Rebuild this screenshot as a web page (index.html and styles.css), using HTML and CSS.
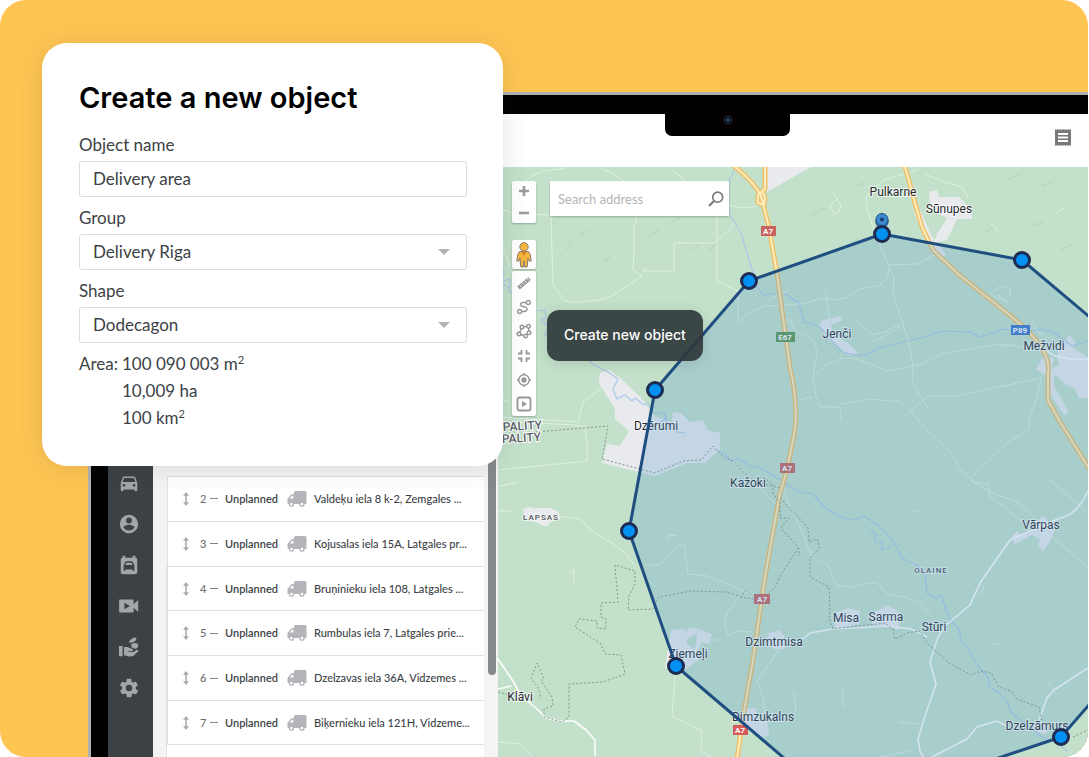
FILE: index.html
```html
<!DOCTYPE html>
<html lang="en">
<head>
<meta charset="utf-8">
<title>Create a new object</title>
<meta name="viewport" content="width=device-width, initial-scale=1">
<link rel="stylesheet" href="styles.css">
</head>
<body>
<svg class="defs" aria-hidden="true">
  <symbol id="truck" viewBox="0 0 20 16"><path fill-rule="evenodd" d="M7 1.500Q7 0 8.500 0H18q1.500 0 1.500 1.500V12q0 1-1 1H1.500q-1 0-1-1V8.800q0-1 .8-1.800l2.200-2.800Q4.300 3 5.500 3H7zM6.400 4.600q-1.200-.2-1.800.6L2.800 7.600h3.600z"/><circle cx="4.400" cy="13.200" r="2" fill="#fff" stroke="currentColor" stroke-width="1.300"/><circle cx="15" cy="13.200" r="2" fill="#fff" stroke="currentColor" stroke-width="1.300"/></symbol>
  <symbol id="drag" viewBox="0 0 8 14"><path d="M4 0l3 3.800H4.800v6.400H7L4 14l-3-3.800h2.200V3.800H1z"/></symbol>
</svg>
<main class="scene">
  <div class="laptop">
    <div class="notch"><span class="camera"></span></div>
    <div class="screen">
      <header class="topbar">
        <button class="icon-button" aria-label="Report"><svg width="16" height="17" viewBox="0 0 16 17"><path fill="#77797b" fill-rule="evenodd" d="M0 0l1.300 1L2.700 0 4 1l1.300-1 1.400 1L8 0l1.300 1 1.400-1L12 1l1.300-1 1.400 1L16 0v17l-1.300-1-1.400 1L12 16l-1.300 1-1.400-1L8 17l-1.300-1-1.400 1L4 16l-1.300 1-1.400-1L0 17zM3 4v2h10V4zm0 3.500v2h10v-2zM3 11v2h10v-2z"/></svg></button>
      </header>
      <div class="workspace">
        <nav class="sidebar">
          <button aria-label="Vehicles"><svg viewBox="0 0 24 24"><path d="M18.900 6c-.2-.6-.8-1-1.400-1h-11c-.7 0-1.200.4-1.400 1L3 12v8c0 .6.400 1 1 1h1c.6 0 1-.4 1-1v-1h12v1c0 .6.400 1 1 1h1c.6 0 1-.4 1-1v-8zM6.500 16a1.500 1.500 0 1 1 0-3 1.500 1.500 0 0 1 0 3zm11 0a1.500 1.500 0 1 1 0-3 1.500 1.500 0 0 1 0 3zM5 11l1.500-4.500h11L19 11z"/></svg></button>
          <button aria-label="Drivers"><svg viewBox="0 0 24 24"><path d="M12 2a10 10 0 1 0 0 20 10 10 0 0 0 0-20zm0 3a3.200 3.200 0 1 1 0 6.400A3.200 3.200 0 0 1 12 5zm0 14.200a7.200 7.200 0 0 1-6-3.200c0-2 4-3.100 6-3.100s6 1.100 6 3.100a7.200 7.200 0 0 1-6 3.200z"/></svg></button>
          <button aria-label="Schedule"><svg viewBox="0 0 24 24"><path fill-rule="evenodd" d="M5 2h3v2h8V2h3v2q2 0 2 2v14q0 2-2 2H5q-2 0-2-2V6q0-2 2-2zm3.500 6L6.200 12v6.500h1.600V17h8.400v1.500h1.600V12l-2.300-4zm.8 1.500h5.400l1.300 2.500H8z"/></svg></button>
          <button aria-label="Video"><svg viewBox="0 0 24 24"><path fill-rule="evenodd" d="M2 5h14q1 0 1 1v4l5-4.500v13L17 14v4q0 1-1 1H2q-.8 0-.8-1V6q0-1 .8-1zm5 3.500v7l6-3.500z"/></svg></button>
          <button aria-label="Eco driving"><svg viewBox="0 0 24 24"><path d="M1 11h4v11H1zM6.500 12h4l5.500 2.500q1 1-.3 2H11v1h6l3.500-2.500q2.300 0 1.500 2l-5 4.500Q14 23 11 22l-4.500-1zM12 6.500q2-5 8-5 .5 4.500-5 5.500-2 .5-2.500 0zM15 12.500q-2-4 2-4.500 4-1.500 5 1.500.5 4-3.500 4.500z"/></svg></button>
          <button aria-label="Settings"><svg viewBox="0 0 24 24"><path d="M19.400 13a7.500 7.500 0 0 0 0-2l2.100-1.600a.5.500 0 0 0 .1-.7l-2-3.400a.5.500 0 0 0-.6-.2l-2.500 1a7.300 7.300 0 0 0-1.700-1L14.500 2.400A.5.500 0 0 0 14 2h-4a.5.500 0 0 0-.5.400l-.4 2.700a7.300 7.300 0 0 0-1.700 1l-2.500-1a.5.500 0 0 0-.6.200l-2 3.400a.5.500 0 0 0 .1.700L4.600 11a7.500 7.500 0 0 0 0 2l-2.100 1.600a.5.500 0 0 0-.1.700l2 3.400c.1.200.4.300.6.200l2.500-1a7.300 7.300 0 0 0 1.700 1l.4 2.700c0 .200.200.4.500.4h4c.3 0 .5-.2.500-.4l.4-2.700a7.300 7.300 0 0 0 1.700-1l2.500 1c.2.100.5 0 .6-.2l2-3.400a.5.500 0 0 0-.1-.7zM12 15.500a3.500 3.500 0 1 1 0-7 3.500 3.500 0 0 1 0 7z"/></svg></button>
        </nav>
        <section class="panel" aria-label="Unplanned tasks">
          <ol class="tasks">
            <li class="task"><svg class="drag"><use href="#drag"/></svg><span class="num">2 <i></i></span><b>Unplanned</b><svg class="truck"><use href="#truck"/></svg><span class="addr">Valdeķu iela 8 k-2, Zemgales ...</span></li>
            <li class="task"><svg class="drag"><use href="#drag"/></svg><span class="num">3 <i></i></span><b>Unplanned</b><svg class="truck"><use href="#truck"/></svg><span class="addr">Kojusalas iela 15A, Latgales pr...</span></li>
            <li class="task"><svg class="drag"><use href="#drag"/></svg><span class="num">4 <i></i></span><b>Unplanned</b><svg class="truck"><use href="#truck"/></svg><span class="addr">Bruņinieku iela 108, Latgales ...</span></li>
            <li class="task"><svg class="drag"><use href="#drag"/></svg><span class="num">5 <i></i></span><b>Unplanned</b><svg class="truck"><use href="#truck"/></svg><span class="addr">Rumbulas iela 7, Latgales prie...</span></li>
            <li class="task"><svg class="drag"><use href="#drag"/></svg><span class="num">6 <i></i></span><b>Unplanned</b><svg class="truck"><use href="#truck"/></svg><span class="addr">Dzelzavas iela 36A, Vidzemes ...</span></li>
            <li class="task"><svg class="drag"><use href="#drag"/></svg><span class="num">7 <i></i></span><b>Unplanned</b><svg class="truck"><use href="#truck"/></svg><span class="addr">Biķernieku iela 121H, Vidzeme...</span></li>
          </ol>
          <div class="scrollbar"><span class="thumb"></span></div>
        </section>
        <section class="map" aria-label="Map">
          <svg class="canvas" viewBox="498 167 590 590" preserveAspectRatio="xMinYMin slice">
            <rect x="498" y="167" width="900" height="900" fill="#c3e1ca"/>
            <g class="relief">
              <path d="M580 236l8-6M566 250l5-8M603 262l8-5M650 236l9-6M671 222l9-4M692 250l7-5M640 198l9-4M709 250l8-6M548 228l6-6M811 215l14-7M846 246l12-7M960 214l13-5M1007 180l14-6M1042 186l12-5M1060 250l12-5M986 232l9-6M722 184l9-4M855 186l9-3M1030 226l14-4"/>
            </g>
            <g class="urban">
              <path d="M767 167h44l-44 25zM929 192l8-2 2 7h20l13 13v9h-15l-10 21-13 3 3-9 10-16-17-9zM914 213l7-2 10 24 15 20-6 3-15-19z"/>
              <path d="M819 325l4-5 18-4 1 4-11 5 2 10 15 8 10 10-8 3-24-19zM1058 348l12-13 5 7-2 6 15 9v41h-9l-4-9-10-5-11-10v12l15 26-5 3-17-26-1-13-10-7 6-11h7l5-1-2 11 7-3-2-7z"/>
              <path d="M600 373l10-3 13 10 19 19 13 18 17 5 1-10 8 1 9 9 13-2 5 10 12 3v17l-15 13h-18l-32 13-53-13 5-19 13 2 9-15-14-12v-10l-16-26z"/>
              <path d="M523 509l5-2 7 1 14 0 9 3 3 8-8 1-7 7-11-5-10-2z"/>
              <path d="M671 630l13-1 2 3 4-4h7v6l-10 5v5l8 5 3-20 14 5-3 10-7-2-5 10 2 7-12 10-22-1zM769 633l11-3 4 6 1 13h-11l-7-10zM745 709l11-1 2 10 9 2 2 15-10 2-11-7-6-10z"/>
              <path d="M1012 536l5-5 4 4 11-4 2-7 9-8 6 6 5-1 2 7-7 15-6 8-5-5 2-7-8-4-18 10zM834 613l14-5 12 3-1 13-24 5zM873 613l15-8 12 8-1 17-9-3-18-3zM1034 724l9-2 7 4-4 8-11-2z"/>
            </g>
            <g class="water">
              <path d="M735 170l-6 10v33l12 20 9 30 7 23 6 9 14-2 8 1 14 9 5 19 16 5 22 25 12 3 12 0 13-7 24-6 22-5 16-6 30 1 8 5 13-4 10-4 22 3 18-3 12 4 18 13 20-6 13 8 8 10"/>
              <path d="M538 311l7-1 1 8-5 2 7 6-3 9 14 9 10 8 14 3 11 10 14 7 10 7-5 10 4 10 8-4 7 6 3-3 9 7 4-2 6 10 10 0 3 11 10 8 8 1M667 418l-8 5 7 8"/>
              <path d="M498 267l6 4-2 12 7 5M503 281l7-2-1 12 5 3M716 450l8 4 8 7 6-3 12 8 10 2 7 4 17 10 15 10 14 2 14 15 16 9 12 2 9-4 14 9 15 15 4 8 5 10 10 5 5 2 8 10 2 18 9 6 5-4 5 14 5 12 8 8 2 11 8 10 4 8 8 12 8 8v9l10 6 9 10 3 10 14 10 7 5 10 9 14 5 12 10"/>
              <path d="M870 530l6 4-1 8 8 1-2 7 10-3"/>
            </g>
            <g class="lane">
              <path d="M525 182q6-8 20-11l20-3M602 169l10 4 14 10M498 208l18 6 35 1 2 70 12 16 6 1 10 0 18-2 12-4 20-12 11-8-9-6 1-20v-26l2-1V215M642 271h32v-28h41l20-19M717 210v71l25 12M645 270l-2-3M671 169l10 8 5 7M498 232l12 35M729 205l12 3 13-1 10-5 4 15 1 8"/>
              <path d="M925 174l22 9 15 4 6 10M904 174l-20 6-18 16 1 12 8 25 7 18 7 14-1 12-9 9-20 3-10 8-14 3-14-2-14 5-20 2-20 1M888 265l30-1 18-10M889 268l5 8-1 18 10 30 8 28 2 18-1 10 4 10 12 18M833 193l8 12-2 7-5 2-4-8 7-7M990 223l8 8M1057 213l8-6M917 169l-8 5"/>
              <path d="M825 290l5 28M790 290l-19 8-6 8-13 5-14 11V289M783 320l8 0 3 10 20 10 3 12-4 25 3 20 4 10 20 0 1 14M813 377l13-12 16-7 15 1 31 12 34-7 20-10 40-7 20-3 30 5 10 2M813 397l-15 3M840 404l15-2 15-3 30 3 14 13 11 13 14 13 13 13 8 15 14 13 15 2v12l16 11 20 18M905 416l22-20h30l46-10 38-8M1041 378l-4 20-8 20v12l-21 12-28 27-10 10M858 322l15 13 14-4 12-6 0 3-18 10-10 3M841 358l2-10M1002 388l-1-5M1009 302l-13-8M1008 303l-18-9 10-8 10 3 0 7M1000 347l15-2"/>
              <path d="M498 511l13 0M557 516l24 3 8 10 26 16 10 8 11 14M498 470l40-4 49-5 0-17-2-17-10-2-60-3M603 387l-20 15-5 20-80-5M498 398l10 3M645 565l15 0 8-10 9-8 7-3 4 30 20 2 20 8 20 9M668 535h9l-9 1 1 6M498 487l20-5M733 461l9 10 20 20 18 17M742 593l-15 20-3 10 4 12 9-4 15 1M780 648l-10 15-13 18 7 20 0 40M675 676l-3 40 30 15-1 20 10 6M498 742l22 2 12 13M570 573l4-4v14M718 640l-15 0M1032 318q2 18 23 22"/>
              <path d="M782 485l8 22 10 20 12 30 16 8 8 20 15 2 18-4 8 0 10 11 16 3 15 4 14 16M806 547l10 8M1050 480l26 22 12 12M970 480l24 14 24 8 19 18 15 17 36 30M843 687v20M900 722l20 2M1048 682l6 10M910 510l8 2M980 595l4-8-5-4M993 643l7 2M796 712l-2-20M880 757l33-7"/>
            </g>
            <g class="road">
              <path d="M498 659l15 22 8 15 15 12 10 10 14 3h14l12 9 9 10v16M498 689l13-3"/>
              <path d="M1088 491q-12 25-28 27l-28 12-22 10-30 43-10 22-24 20-8 12-8 25 6 22-12 35-6 20 2 12 10 18M927 637l-16-8-23-3-55 3-23 4-10 8M1088 668l-34 22-7 8-9 25M932 757l35-18 10-12 20-6 10 5M1043 349l12 7 15 3h18"/>
            </g>
            <g class="highway">
              <path class="casing" d="M730 163q24 18 31 33l7 27 9 50 4 30 9 64q8 35 5 63l-8 40-7 23-15 84-12 83-10 57-6 42M765 163v26l-7 6 0 8 6 2 1-8-3-6M904 163l11 40 7 24 11 23 24 23 50 40q46 36 41 60v27l12 22 30 48"/>
              <path class="fill" d="M730 163q24 18 31 33l7 27 9 50 4 30 9 64q8 35 5 63l-8 40-7 23-15 84-12 83-10 57-6 42M765 163v26l-7 6 0 8 6 2 1-8-3-6M904 163l11 40 7 24 11 23 24 23 50 40q46 36 41 60v27l12 22 30 48"/>
            </g>
            <g class="border">
              <path d="M535 432l73-6-6 33 53 14 28-12 18-1 12-14 12 12 10 4 8 10 12 10 25 6M763 477l10 8v8l7 10 0 15 9 0-8 10 18 20 0 8M798 548l-18 28-4 10-15 14-15-2-20-6-35-1-32 6-6 12-25 1 1-14 6-12v-13l-20-6 3 37-17 1v14l5 2v10l-9-1v-7l-18-2-4 8 26 17 4 10 16 1 4 19-22 8-34 2 0 33-7 5-18-5 0-8 9-3-1-9-11-16 3-2-7-16-6 16 7 8 3 12M746 590l-6 8M498 692l15 4M780 498l28 30 1 14 8-3 3 8-10 12 0 18 19 10 1 21-1 10 4 11 52-6 8 6 2 10 12-6 12-2 10 14 20 18 22 12 10-4 10 2 8 14 12 4 6 8 22 8 3 14M1073 737l15-7"/>
            </g>
            <g class="shield">
              <rect x="761" y="226" width="15" height="10" fill="#c8645f"/><rect x="776" y="332" width="19" height="10" fill="#5b9651"/><rect x="780" y="463" width="15" height="10" fill="#c8645f"/><rect x="754" y="594" width="16" height="10" fill="#c8645f"/><rect x="733" y="725" width="15" height="10" fill="#d45c58"/><rect x="1011" y="325" width="19" height="10" fill="#3e74c7"/>
              <text x="768" y="234">A7</text><text x="785" y="340">E67</text><text x="787" y="471">A7</text><text x="762" y="602">A7</text><text x="740" y="733">A7</text><text x="1020" y="333">P89</text>
            </g>
            <g class="place">
              <text x="893" y="196">Pulkarne</text><text x="949" y="213">Sūnupes</text><text x="837" y="338">Jenči</text><text x="1044" y="350">Mežvidi</text><text x="656" y="430">Dzērumi</text><text x="748" y="487">Kažoki</text><text x="1041" y="529">Vārpas</text><text x="846" y="622">Misa</text><text x="886" y="621">Sarma</text><text x="934" y="631">Stūri</text><text x="774" y="646">Dzimtmisa</text><text x="688" y="658">Ziemeļi</text><text x="763" y="721">Dimzukalns</text><text x="1037" y="730">Dzelzāmurs</text><text x="520" y="701">Klāvi</text>
            </g>
            <g class="district"><text x="541" y="520">LAPSAS</text><text x="931" y="573">OLAINE</text></g>
            <g class="municipality"><text x="503" y="431" transform="rotate(-3 503 431)">PALITY</text><text x="502" y="443" transform="rotate(-3 502 443)">PALITY</text></g>
            <g class="pin"><path d="M882 234l-5-9a6 6 0 1 1 10 0z"/><circle cx="882" cy="219.500" r="6"/><circle class="pin-dot" cx="882" cy="219.500" r="2"/></g>
            <path class="zone" d="M882 234l140 26 108 91 27 153-27 154-69 79-161 54-102-21-122-104-47-135 26-141 94-109z"/>
            <g class="vertex"><circle cx="882" cy="234" r="7.500"/><circle cx="1022" cy="260" r="7.500"/><circle cx="749" cy="281" r="7.500"/><circle cx="655" cy="390" r="7.500"/><circle cx="629" cy="531" r="7.500"/><circle cx="676" cy="666" r="7.500"/><circle cx="1061" cy="737" r="7.500"/></g>
          </svg>
          <div class="controls">
            <div class="control-group zoomer">
              <button aria-label="Zoom in"><svg width="10" height="10" viewBox="0 0 10 10"><path d="M5 0v10M0 5h10" stroke="#999b9d" stroke-width="2.600"/></svg></button>
              <button aria-label="Zoom out"><svg width="10" height="10" viewBox="0 0 10 10"><path d="M0 5h10" stroke="#999b9d" stroke-width="2.600"/></svg></button>
            </div>
            <button class="control-group pegman" aria-label="Street view"><svg width="16" height="26" viewBox="0 0 16 26"><g fill="#f6b53c" stroke="#858079" stroke-width="1"><path d="M4 9.500Q2.500 10 2 12l-1.300 6.500 2 1L4 16l.8 9h2.700l.5-6 .5 6h2.700l.8-9 1.300 3.500 2-1L14 12q-.5-2-2-2.500z"/><circle cx="8" cy="4.800" r="4.200"/></g><path d="M4.800 9.500h6.400L8 14z" fill="#d98532"/></svg></button>
            <div class="control-group tools">
              <button aria-label="Ruler"><svg viewBox="0 0 16 16"><path d="M2.500 13l11-9.500" stroke-width="4"/><path d="M3.500 9.500l1.800 2.200M6 7.400l1.800 2.200M8.500 5.300l1.800 2.200M11 3.200l1.800 2.200" stroke="#fff" stroke-width="1"/></svg></button>
              <button aria-label="Route"><svg viewBox="0 0 16 16"><circle cx="12.300" cy="3.500" r="2"/><circle cx="3.700" cy="12.500" r="2"/><path d="M10.300 3.500H6.800q-3 .5-2 2.800.5.900 2 1.200l2.500.6q2.500.8 1.500 3-.7 1.600-5 1.400"/></svg></button>
              <button aria-label="Create new object"><svg viewBox="0 0 16 16"><circle cx="6" cy="4" r="1.800"/><circle cx="12.500" cy="3.300" r="1.800"/><circle cx="13" cy="9.800" r="1.800"/><circle cx="9.500" cy="13" r="1.800"/><circle cx="3" cy="11" r="1.800"/><path d="M7.800 3.800l2.900-.3M12.600 5.100l.2 2.900M4.700 11.500l3 1M5.300 5.700L3.700 9.300"/></svg></button>
              <button aria-label="Fit view"><svg viewBox="0 0 16 16"><path d="M2 5.500h3.500V2M14 5.500h-3.500V2M2 10.500h3.500V14M14 10.500h-3.500V14" stroke-width="1.800"/></svg></button>
              <button aria-label="My location"><svg viewBox="0 0 16 16"><circle cx="8" cy="8" r="5.200"/><circle cx="8" cy="8" r="2" fill="#96989a"/><path d="M8 1v2M8 13v2M1 8h2M13 8h2"/></svg></button>
              <button aria-label="Play"><svg viewBox="0 0 16 16"><rect x="1.500" y="1.500" width="13" height="13" rx="2" stroke-width="1.800"/><path d="M6 5v6l5-3z" fill="#96989a" stroke="none"/></svg></button>
            </div>
          </div>
          <label class="search"><input type="search" placeholder="Search address" aria-label="Search address"><svg width="16" height="16" viewBox="0 0 16 16"><circle cx="9.700" cy="6.200" r="5" fill="none" stroke="#77797b" stroke-width="1.700"/><path d="M6.200 9.700L1 15" stroke="#77797b" stroke-width="2"/></svg></label>
          <div class="tooltip" role="tooltip">Create new object</div>
        </section>
      </div>
    </div>
  </div>
  <form class="card">
    <h1>Create a new object</h1>
    <div class="field"><label for="name">Object name</label><input id="name" type="text" value="Delivery area"></div>
    <div class="field"><label for="group">Group</label><span class="select"><select id="group"><option>Delivery Riga</option></select></span></div>
    <div class="field"><label for="shape">Shape</label><span class="select"><select id="shape"><option>Dodecagon</option></select></span></div>
    <dl class="area"><dt>Area:</dt><dd>100 090 003 m<sup>2</sup></dd><dd>10,009 ha</dd><dd>100 km<sup>2</sup></dd></dl>
  </form>
</main>
</body>
</html>
```
FILE: styles.css
```css
* { box-sizing: border-box; }
body { margin: 0; padding-right: 1px; background: #fff; font-family: Lato, "Noto Sans", sans-serif; color: #3c4246; }
button { border: 0; padding: 0; background: none; display: grid; place-items: center; }
svg { display: block; }
.defs { position: absolute; width: 0; height: 0; }

.scene { position: relative; display: flex; min-height: 100vh; padding: 92px 0 0 88px; border-radius: 26px; overflow: hidden; background: #ffc552; }

.laptop { position: relative; flex: 1; display: flex; padding: 19px 0 0 17px; background: #000; border: solid #b0b1b4; border-width: 3px 0 0 3px; }
.notch { position: absolute; top: 18px; left: 574px; z-index: 1; width: 125px; height: 23px; border-radius: 0 0 7px 7px; background: #000; display: grid; place-items: center; }
.camera { width: 10px; height: 10px; margin-bottom: 10px; border-radius: 50%; background: radial-gradient(#24508f 0 1px, #17181b 2px); }
.screen { flex: 1; min-width: 0; display: flex; flex-direction: column; background: #fff; }
.topbar { display: flex; justify-content: flex-end; align-items: center; height: 54px; padding: 0 17px 6px; border-bottom: 1px solid #e3e4e6; }
.workspace { flex: 1; display: flex; margin-top: -1px; }

.sidebar { width: 45px; padding: 305px 3px 0 0; background: #3c4145; display: flex; flex-direction: column; align-items: center; gap: 19px; }
.sidebar svg { width: 22px; height: 22px; fill: #a3a5a8; }

.panel { width: 345px; display: flex; padding: 0 2px 0 14px; background: #f4f4f5; }
.tasks { flex: 1; display: grid; grid-auto-rows: 1fr; align-content: start; margin: 309px 0 0; padding: 0; list-style: none; background: #fff; border-left: 1px solid #dfe0e1; min-height: 269px; height: 269px; box-shadow: 0 90px #fff, -1px 90px #dfe0e1; }
.task { display: flex; align-items: center; padding-left: 14px; border-top: 1px solid #dfe0e1; font-size: 11px; font-weight: 500; line-height: 16px; white-space: nowrap; }
.task:last-child { border-bottom: 1px solid #dfe0e1; }
.task b { width: 62px; font-weight: 600; }
.drag { width: 8px; height: 14px; margin-right: 10px; fill: #a9abad; }
.num { display: flex; align-items: center; gap: 4px; width: 25px; color: #6b6e71; }
.num i { width: 8px; height: 1px; background: #85888a; }
.truck { width: 20px; height: 16px; margin-right: 7px; fill: #b4b4ba; color: #b4b4ba; }
.scrollbar { width: 12px; padding: 0 0 0 4px; }
.thumb { display: block; width: 8px; height: 508px; border-radius: 4px; background: #85898d; }

.map { position: relative; flex: 1; min-width: 0; overflow: hidden; }
.canvas { position: absolute; width: 100%; height: 100%; }
.relief path { fill: none; stroke: #bbd9c2; stroke-width: 2; }
.urban path { fill: #e8eaed; }
.canvas .water, .lane, .road, .highway, .border { fill: none; stroke-linejoin: round; }
.water { stroke: #a9c6e8; stroke-width: 1.1; }
.lane { stroke: #def0e0; stroke-width: 1; }
.road { stroke: #fcfdfc; stroke-width: 1.6; }
.casing { stroke: #eec069; stroke-width: 5; }
.fill { stroke: #fdedbd; stroke-width: 2; }
.border { stroke: #84958b; stroke-width: 1; stroke-dasharray: 2 2; }
.shield text { font: 700 8px Roboto, sans-serif; fill: #fff; text-anchor: middle; }
.place text { font: 12px Roboto, sans-serif; fill: #25292d; text-anchor: middle; paint-order: stroke; stroke: #fff; stroke-opacity: .7; stroke-width: 2; }
.district text { font: 500 8px Roboto, sans-serif; letter-spacing: 1px; fill: #4a5056; text-anchor: middle; paint-order: stroke; stroke: #fff; stroke-opacity: .6; stroke-width: 2; }
.municipality text { font: 500 12px Roboto, sans-serif; fill: #5b6367; paint-order: stroke; stroke: #fff; stroke-width: 2; }
.pin { fill: #3b8ad0; stroke: #1d5185; stroke-width: 1; }
.pin .pin-dot { fill: #1b3a6b; stroke: none; }
.zone { fill: rgba(87, 153, 206, .25); stroke: #1f4e80; stroke-width: 3; stroke-linejoin: round; }
.vertex { fill: #0091f2; stroke: #1e2a52; stroke-width: 3; }

.controls { position: absolute; top: 14px; left: 14px; width: 24px; display: flex; flex-direction: column; }
.control-group { background: #fff; border-radius: 2px; box-shadow: 0 1px 2px rgba(0, 0, 0, .25); }
.zoomer { display: grid; gap: 2px; }
.zoomer button { width: 24px; height: 20px; }
.pegman { width: 24px; height: 29px; margin: 17px 0 2px; }
.tools { display: grid; grid-auto-rows: 1fr; height: 145px; }
.tools button { width: 24px; }
.tools svg { width: 16px; height: 16px; fill: none; stroke: #96989a; stroke-width: 1.4; }
.search { position: absolute; top: 14px; left: 52px; width: 179px; height: 35px; padding: 0 5px 0 8px; display: flex; align-items: center; background: #fff; box-shadow: 0 1px 2px rgba(0, 0, 0, .25); }
.search input { flex: 1; min-width: 0; border: 0; padding: 0; outline: 0; font: 13px Lato, sans-serif; }
.search input::placeholder { color: #b3b5b7; }
.tooltip { position: absolute; top: 143px; left: 49px; padding: 15px 17px 17px; border-radius: 12px; background: rgba(48, 56, 59, .92); color: #fff; font: 500 14px/19px Inter, sans-serif; white-space: nowrap; box-shadow: 0 2px 14px rgba(0, 0, 0, .12); }

.card { position: absolute; top: 43px; left: 42px; z-index: 2; width: 461px; padding: 37px 36px 36px 37px; border-radius: 25px; background: #fff; box-shadow: 0 2px 26px rgba(60, 66, 70, .14); font-size: 17px; line-height: 25px; }
.card h1 { margin: 0 0 16px; font: 600 29px/36px Inter, sans-serif; color: #000; }
.field { display: grid; gap: 4px; margin-bottom: 8px; }
.field input, .field select { width: 100%; height: 36px; padding: 0 13px 2px; border: 1px solid #dadbdd; border-radius: 3px; background: #fff; font: inherit; color: #3c4246; appearance: none; }
.select { position: relative; display: block; }
.select select { display: block; }
.select::after { content: ""; position: absolute; top: 15px; right: 17px; border: solid transparent; border-width: 6px 6px 0; border-top-color: #b3b4b8; }
.area { display: grid; grid-template-columns: max-content 1fr; gap: 2px 4px; margin: 0; }
.area dd { grid-column: 2; margin: 0; }
.area sup { font-size: 11px; line-height: 0; vertical-align: 6px; }
```
